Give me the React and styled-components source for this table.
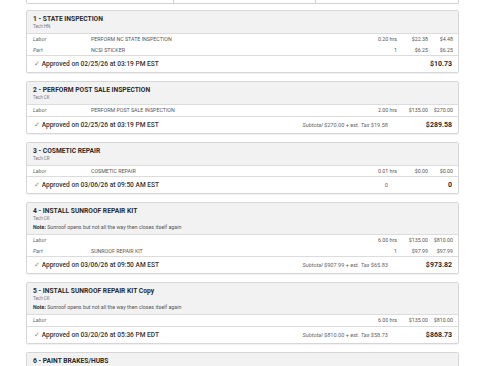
import React from 'react';
import styled, { createGlobalStyle } from 'styled-components';

const GlobalStyle = createGlobalStyle`
  html, body {
    margin: 0;
    padding: 0;
    background: #fff;
    font-family: Roboto, "Liberation Sans", Arial, sans-serif;
    color: #333;
  }
`;

const jobs = [
  {
    title: '1 - STATE INSPECTION',
    tech: 'Tech HN',
    lines: [
      { type: 'Labor', desc: 'PERFORM NC STATE INSPECTION', qty: '0.20 hrs', rate: '$22.38', total: '$4.48' },
      { type: 'Part', desc: 'NCSI STICKER', qty: '1', rate: '$6.25', total: '$6.25' },
    ],
    approved: '02/25/26 at 03:19 PM EST',
    total: '$10.73',
  },
  {
    title: '2 - PERFORM POST SALE INSPECTION',
    tech: 'Tech CK',
    lines: [
      { type: 'Labor', desc: 'PERFORM POST SALE INSPECTION', qty: '2.00 hrs', rate: '$135.00', total: '$270.00' },
    ],
    approved: '02/25/26 at 03:19 PM EST',
    subtotal: ['Subtotal', ' $270.00 + est. ', 'Tax', ' $19.58'],
    total: '$289.58',
  },
  {
    title: '3 - COSMETIC REPAIR',
    tech: 'Tech CR',
    lines: [
      { type: 'Labor', desc: 'COSMETIC REPAIR', qty: '0.01 hrs', rate: '$0.00', total: '$0.00' },
    ],
    approved: '03/06/26 at 09:50 AM EST',
    subtotalPlain: '0',
    total: '0',
  },
  {
    title: '4 - INSTALL SUNROOF REPAIR KIT',
    tech: 'Tech CK',
    note: 'Sunroof opens but not all the way then closes itself again',
    lines: [
      { type: 'Labor', desc: '', qty: '6.00 hrs', rate: '$135.00', total: '$810.00' },
      { type: 'Part', desc: 'SUNROOF REPAIR KIT', qty: '1', rate: '$97.99', total: '$97.99' },
    ],
    approved: '03/06/26 at 09:50 AM EST',
    subtotal: ['Subtotal', ' $907.99 + est. ', 'Tax', ' $65.83'],
    total: '$973.82',
  },
  {
    title: '5 - INSTALL SUNROOF REPAIR KIT Copy',
    tech: 'Tech CK',
    note: 'Sunroof opens but not all the way then closes itself again',
    lines: [
      { type: 'Labor', desc: '', qty: '6.00 hrs', rate: '$135.00', total: '$810.00' },
    ],
    approved: '03/20/26 at 05:36 PM EDT',
    subtotal: ['Subtotal', ' $810.00 + est. ', 'Tax', ' $58.73'],
    total: '$868.73',
  },
  {
    title: '6 - PAINT BRAKES/HUBS',
    tech: 'Tech CK',
    lines: [],
  },
];

export default function App() {
  return (
    <>
      <GlobalStyle />
      <Page>
        <TopBox>
          <TopCell />
          <TopCell />
          <TopCell />
        </TopBox>
        {jobs.map((job) => (
          <Card key={job.title}>
            <Header>
              <Title>{job.title}</Title>
              <Tech>{job.tech}</Tech>
              {job.note && (
                <Note>
                  <b>Note:</b> {job.note}
                </Note>
              )}
            </Header>
            {job.lines.length > 0 && (
              <Lines>
                {job.lines.map((l, i) => (
                  <Line key={i}>
                    <Type>{l.type}</Type>
                    <Desc>{l.desc}</Desc>
                    <Num>{l.qty}</Num>
                    <Num>{l.rate}</Num>
                    <Num>{l.total}</Num>
                  </Line>
                ))}
              </Lines>
            )}
            {job.approved && (
              <Footer>
                <Approved>
                  <Check>✓</Check> Approved on {job.approved}
                </Approved>
                <Subtotal>
                  {job.subtotal && (
                    <>
                      <i>{job.subtotal[0]}</i>
                      {job.subtotal[1]}
                      <i>{job.subtotal[2]}</i>
                      {job.subtotal[3]}
                    </>
                  )}
                  {job.subtotalPlain}
                </Subtotal>
                <Total>{job.total}</Total>
              </Footer>
            )}
          </Card>
        ))}
      </Page>
    </>
  );
}

const Page = styled.div`
  width: 433px;
  margin-left: 26px;
  display: flex;
  flex-direction: column;
  gap: 8px;
  height: 366px;
  overflow: hidden;
`;

const TopBox = styled.div`
  display: grid;
  grid-template-columns: 146px 142px 1fr;
  height: 3px;
  border: 1px solid #d2d2d2;
  border-top: none;
  border-radius: 0 0 2px 2px;
  margin-bottom: -2px;
  flex-shrink: 0;
`;

const TopCell = styled.div`
  & + & {
    border-left: 1px solid #cfcfcf;
  }
`;

const Card = styled.div`
  flex-shrink: 0;
  border: 1px solid #d6d6d6;
  border-radius: 2px;
  box-shadow: 0 1px 1px rgba(0, 0, 0, 0.06);
  background: #fff;
`;

const Header = styled.div`
  background: #f2f2f2;
  padding: 4px 6px 3px;
  display: flex;
  flex-direction: column;
`;

const Title = styled.div`
  font-size: 6.7px;
  font-weight: 700;
  line-height: 9px;
  height: 9px;
  color: #2b2b2b;
`;

const Tech = styled.div`
  font-size: 4.5px;
  line-height: 6px;
  height: 6px;
  color: #777;
`;

const Note = styled.div`
  font-size: 5.3px;
  line-height: 7px;
  height: 7px;
  margin-top: 2px;
  color: #555;

  b {
    font-weight: 700;
    color: #333;
  }
`;

const Lines = styled.div`
  border-top: 1px solid #dcdcdc;
  border-bottom: 1px solid #dcdcdc;
`;

const Line = styled.div`
  display: grid;
  grid-template-columns: 58px 1fr 40px 31px 25px;
  align-items: center;
  height: 10.5px;
  line-height: 10px;
  padding: 0 5px 0 6px;
  font-size: 5.3px;
  color: #555;
`;

const Type = styled.span`
  font-style: italic;
  color: #666;
`;

const Desc = styled.span`
  color: #555;
`;

const Num = styled.span`
  text-align: right;
  color: #555;
`;

const Footer = styled.div`
  display: flex;
  align-items: center;
  height: 16px;
  line-height: 10px;
  padding: 0 6px 0 7px;
`;

const Approved = styled.div`
  flex: 1;
  font-size: 6.6px;
  font-weight: 500;
  color: #333;
`;

const Check = styled.span`
  color: #888;
  font-weight: 400;
`;

const Subtotal = styled.div`
  font-size: 5.6px;
  color: #666;
`;

const Total = styled.div`
  width: 64px;
  text-align: right;
  font-size: 7px;
  font-weight: 700;
  color: #2b2b2b;
`;
